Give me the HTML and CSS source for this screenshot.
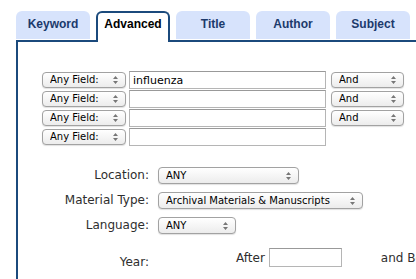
FILE: index.html
```html
<!DOCTYPE html>
<html lang="en">
<head>
    <meta charset="UTF-8">
    <meta name="viewport" content="width=device-width, initial-scale=1.0">
    <title>Advanced Search</title>
    <link rel="stylesheet" href="styles.css">
</head>
<body>
    <div class="tabs">
        <div class="tab">Keyword</div>
        <div class="tab active">Advanced</div>
        <div class="tab">Title</div>
        <div class="tab">Author</div>
        <div class="tab">Subject</div>
    </div>

    <form class="panel">
        <div class="terms">
            <div class="term-row">
                <select class="sel field"><option>Any Field:</option></select>
                <input type="text" class="term" value="influenza">
                <select class="sel bool"><option>And</option></select>
            </div>
            <div class="term-row">
                <select class="sel field"><option>Any Field:</option></select>
                <input type="text" class="term">
                <select class="sel bool"><option>And</option></select>
            </div>
            <div class="term-row">
                <select class="sel field"><option>Any Field:</option></select>
                <input type="text" class="term">
                <select class="sel bool"><option>And</option></select>
            </div>
            <div class="term-row">
                <select class="sel field"><option>Any Field:</option></select>
                <input type="text" class="term">
            </div>
        </div>

        <div class="limits">
            <label class="lim-label">Location:</label>
            <div><select class="sel location"><option>ANY</option></select></div>

            <label class="lim-label">Material Type:</label>
            <div><select class="sel material"><option>Archival Materials &amp; Manuscripts</option></select></div>

            <label class="lim-label">Language:</label>
            <div><select class="sel language"><option>ANY</option></select></div>

            <label class="lim-label year-label">Year:</label>
            <div class="year">
                <span>After</span>
                <input type="text" class="year-box">
                <span class="year-and">and Before</span>
            </div>
        </div>
    </form>
</body>
</html>
```

FILE: styles.css
```css
body {
    margin: 0;
    padding: 0;
    background-color: #fff;
    font-family: 'DejaVu Sans', Verdana, sans-serif;
    overflow: hidden;
}

.tabs {
    display: flex;
    align-items: flex-end;
    gap: 6px;
    height: 29px;
    padding: 11px 0 0 16px;
}

.tab {
    width: 74px;
    height: 28px;
    margin-bottom: 1px;
    box-sizing: border-box;
    background-color: #d7e3fc;
    border-radius: 6px 6px 0 0;
    color: #1c3a6c;
    font-family: 'Liberation Sans', Arial, sans-serif;
    font-weight: bold;
    font-size: 12px;
    line-height: 26px;
    text-align: center;
}

.tab.active {
    position: relative;
    z-index: 1;
    height: 31px;
    margin-bottom: -2px;
    background-color: #fff;
    border: 2px solid #1b4a7c;
    border-bottom: none;
    color: #000;
    line-height: 22px;
}

.panel {
    margin: 0 0 0 16px;
    width: 460px;
    min-height: 300px;
    border-top: 2px solid #1b4a7c;
    border-left: 2px solid #1b4a7c;
    padding: 29px 0 0 24px;
}

.terms {
    display: flex;
    flex-direction: column;
    gap: 1px;
}

.term-row {
    display: flex;
    align-items: center;
    height: 18px;
}

.sel {
    -webkit-appearance: none;
    appearance: none;
    height: 16px;
    box-sizing: border-box;
    border: 1px solid #a2a2a2;
    border-radius: 4px;
    padding: 0 0 0 7px;
    margin: 0;
    font-family: 'DejaVu Sans', Verdana, sans-serif;
    font-size: 10px;
    line-height: 14px;
    color: #000;
    background-color: #f4f4f4;
    background-image:
        url("data:image/svg+xml;utf8,<svg xmlns='http://www.w3.org/2000/svg' width='5' height='8'><path d='M2.5 0 L5 3 H0 Z M2.5 8 L5 5 H0 Z' fill='%23777'/></svg>"),
        linear-gradient(#ffffff, #ececec);
    background-repeat: no-repeat, no-repeat;
    background-position: right 7px center, 0 0;
    box-shadow: 0 1px 1px rgba(0, 0, 0, 0.12);
    outline: none;
}

.field {
    width: 84px;
}

.term {
    width: 197px;
    height: 18px;
    box-sizing: border-box;
    margin: 0 5px 0 3px;
    padding: 0 3px;
    border: 1px solid #b5b5b5;
    border-top-color: #999;
    font-family: 'DejaVu Sans', Verdana, sans-serif;
    font-size: 11px;
    color: #000;
    outline: none;
}

.bool {
    width: 73px;
}

.limits {
    display: grid;
    grid-template-columns: 131px auto;
    column-gap: 9px;
    row-gap: 8px;
    align-items: center;
    margin: 21px 0 0 -24px;
    font-size: 12px;
    color: #2e2e2e;
}

.lim-label {
    text-align: right;
    line-height: 17px;
}

.limits .sel {
    display: block;
    height: 17px;
}

.location {
    width: 141px;
}

.material {
    width: 205px;
}

.language {
    width: 78px;
}

.year-label {
    align-self: start;
    margin-top: 12px;
}

.year {
    align-self: start;
    display: flex;
    align-items: center;
    height: 19px;
    margin-top: 6px;
    padding-left: 78px;
    white-space: nowrap;
}

.year-box {
    width: 73px;
    height: 19px;
    box-sizing: border-box;
    margin: 0 0 0 4px;
    border: 1px solid #b5b5b5;
    border-top-color: #999;
    outline: none;
}

.year-and {
    margin-left: 39px;
}
```
